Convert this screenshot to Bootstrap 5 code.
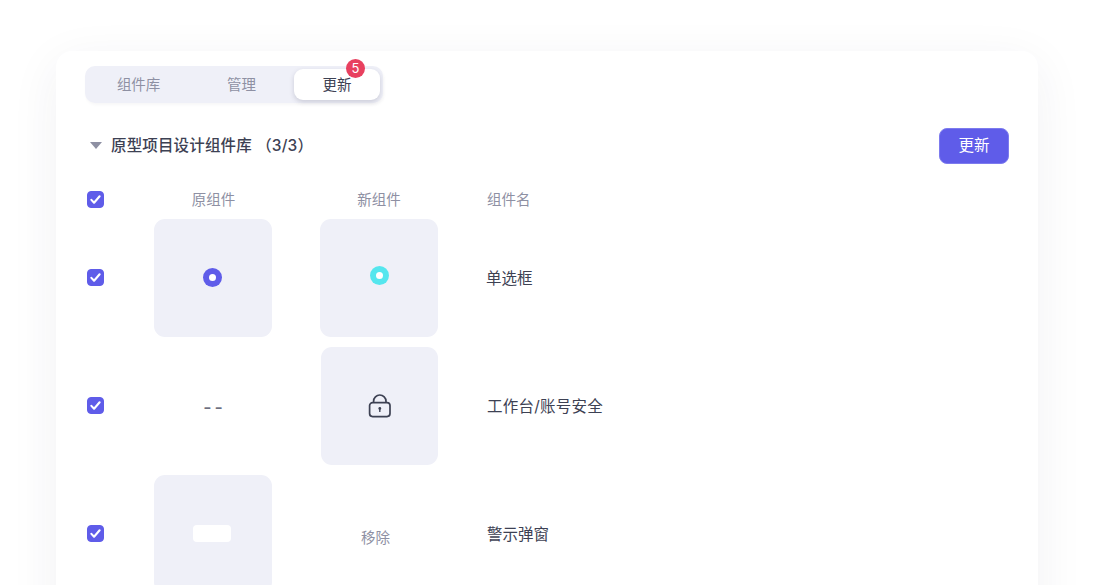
<!DOCTYPE html>
<html lang="zh">
<head>
<meta charset="utf-8">
<title>更新</title>
<link href="https://cdn.jsdelivr.net/npm/bootstrap@5.3.0/dist/css/bootstrap.min.css" rel="stylesheet">
<style>
html,body{height:100%;overflow:hidden;background:#fff}
body{font-family:Inter,"Noto Sans CJK SC",sans-serif;color:#3d4153;padding:51px 60px 0 56px}
.panel{background:#fff;border-radius:16px;box-shadow:0 12px 50px rgba(40,40,70,.065);padding:15px 29px 40px;height:640px}
.seg{width:298px;height:37px;background:#eff0f8;border-radius:10px;padding:3px;box-shadow:1px 2px 3px rgba(40,40,70,.04)}
.seg .nav-link{color:#8e90a3;font-size:14.5px;padding:0;height:31px;line-height:31px;text-align:center;border-radius:9px;position:relative;letter-spacing:-.1px}
.seg .seg-a{width:101px}
.seg .seg-b{width:105px}
.seg .seg-c{width:86px}
.seg .nav-link.active{background:#fff;color:#3d4153;box-shadow:0 2px 5px rgba(40,40,70,.18)}
.count{position:absolute;top:-10px;left:52px;width:19px;height:19px;padding:0;line-height:19px;font-size:13px;font-weight:400;background:#e8405f}
.headline{height:36px;margin-top:25px}
.tri{width:0;height:0;border-left:6px solid transparent;border-right:6px solid transparent;border-top:7px solid #8e90a3;margin:-1px 9px 0 5px}
.headline h2{font-size:15.5px;font-weight:500;margin:0;color:#3d4153;letter-spacing:.15px}
.go{background:#5f5ce9;border:1px solid #7d7bee;color:#fff;width:70px;height:36px;font-size:15.5px;padding:0;border-radius:8px}
.go:hover{background:#5f5ce9;color:#fff}
.tbl{display:grid;grid-template-columns:69px 118px 48px 118px 49px 1fr;margin-top:17px}
.tbl>.hd{height:38px;display:flex;align-items:center;color:#8e90a3;font-size:14.5px}
.tbl>.cell{height:128px;display:flex;align-items:center;padding-bottom:10px}
.mid{justify-content:center}
.hd-first{padding-left:1px}
.form-check-input.tick{width:17px;height:17px;margin:-1px 0 0 2px;border-radius:4px;background-color:#5f5ce9;border-color:#5f5ce9;flex:none}
.form-check-input.tick:checked[type=checkbox]{--bs-form-check-bg-image:url("data:image/svg+xml,%3csvg xmlns='http://www.w3.org/2000/svg' viewBox='0 0 20 20'%3e%3cpath fill='none' stroke='%23fff' stroke-linecap='round' stroke-linejoin='round' stroke-width='2.8' d='m4.5 10.5 3.6 3.8 7.4-8.6'/%3e%3c/svg%3e")}
.thumb{width:118px;height:118px;background:#eff0f8;border-radius:11px;display:flex;align-items:center;justify-content:center}
.dot{width:19px;height:19px;border-radius:50%;background:#5f5ce9;display:block;margin:-1px 0 0 -2px}
.dot::after{content:"";display:block;width:7px;height:7px;border-radius:50%;background:#fff;margin:6px}
.dot-new{background:#55e6ee;margin:-6px 0 0 0}
.chip{width:38px;height:17px;background:#fff;border-radius:4px;display:block;margin:-2px 0 0 -2px}
.tbl>.nm{font-size:15.5px;color:#3d4153;padding-bottom:8px}
.nm-wide{letter-spacing:.25px}
.nudge-left{margin-left:-1px}
.dash{color:#6d6f80;font-size:18px;font-weight:500;letter-spacing:3px;margin:2px 0 0 3px}
.tbl>.gone{color:#8e90a3;font-size:14.5px;padding-top:8px;padding-bottom:10px;padding-right:7px}
.shift{margin-left:1px}
</style>
</head>
<body>
<div class="panel">
  <ul class="nav seg flex-nowrap">
    <li class="nav-item"><a class="nav-link seg-a" href="#">组件库</a></li>
    <li class="nav-item"><a class="nav-link seg-b" href="#">管理</a></li>
    <li class="nav-item"><a class="nav-link seg-c active" href="#">更新<span class="badge rounded-pill count">5</span></a></li>
  </ul>
  <div class="headline d-flex align-items-center justify-content-between">
    <div class="d-flex align-items-center">
      <span class="tri"></span>
      <h2>原型项目设计组件库 （3/3）</h2>
    </div>
    <button type="button" class="btn go">更新</button>
  </div>
  <div class="tbl">
    <div class="hd"><input class="form-check-input tick" type="checkbox" checked aria-label="全选"></div>
    <div class="hd mid hd-first">原组件</div><div class="hd"></div>
    <div class="hd mid">新组件</div><div class="hd"></div>
    <div class="hd">组件名</div>

    <div class="cell"><input class="form-check-input tick" type="checkbox" checked aria-label="单选框"></div>
    <div class="cell mid"><div class="thumb"><span class="dot"></span></div></div><div class="cell"></div>
    <div class="cell mid"><div class="thumb"><span class="dot dot-new"></span></div></div><div class="cell"></div>
    <div class="cell nm"><span class="nudge-left">单选框</span></div>

    <div class="cell"><input class="form-check-input tick" type="checkbox" checked aria-label="工作台/账号安全"></div>
    <div class="cell mid"><span class="dash">--</span></div><div class="cell"></div>
    <div class="cell mid"><div class="thumb shift">
      <svg width="24" height="24" viewBox="0 0 24 24" fill="none" stroke="#3d4153" stroke-width="1.7" aria-hidden="true"><rect x="1.6" y="8.6" width="20.4" height="14" rx="3"/><path d="M5.6 8.6V7.2a6.2 6.2 0 0 1 12.4 0v1.4"/><circle cx="11.8" cy="14.4" r="1.4" fill="#3d4153" stroke="none"/><path d="M11.8 15v3" stroke-width="1.4"/></svg>
    </div></div><div class="cell"></div>
    <div class="cell nm nm-wide">工作台/账号安全</div>

    <div class="cell"><input class="form-check-input tick" type="checkbox" checked aria-label="警示弹窗"></div>
    <div class="cell mid"><div class="thumb"><span class="chip"></span></div></div><div class="cell"></div>
    <div class="cell mid gone">移除</div><div class="cell"></div>
    <div class="cell nm">警示弹窗</div>
  </div>
</div>
<script src="https://cdn.jsdelivr.net/npm/bootstrap@5.3.0/dist/js/bootstrap.bundle.min.js"></script>
</body>
</html>
